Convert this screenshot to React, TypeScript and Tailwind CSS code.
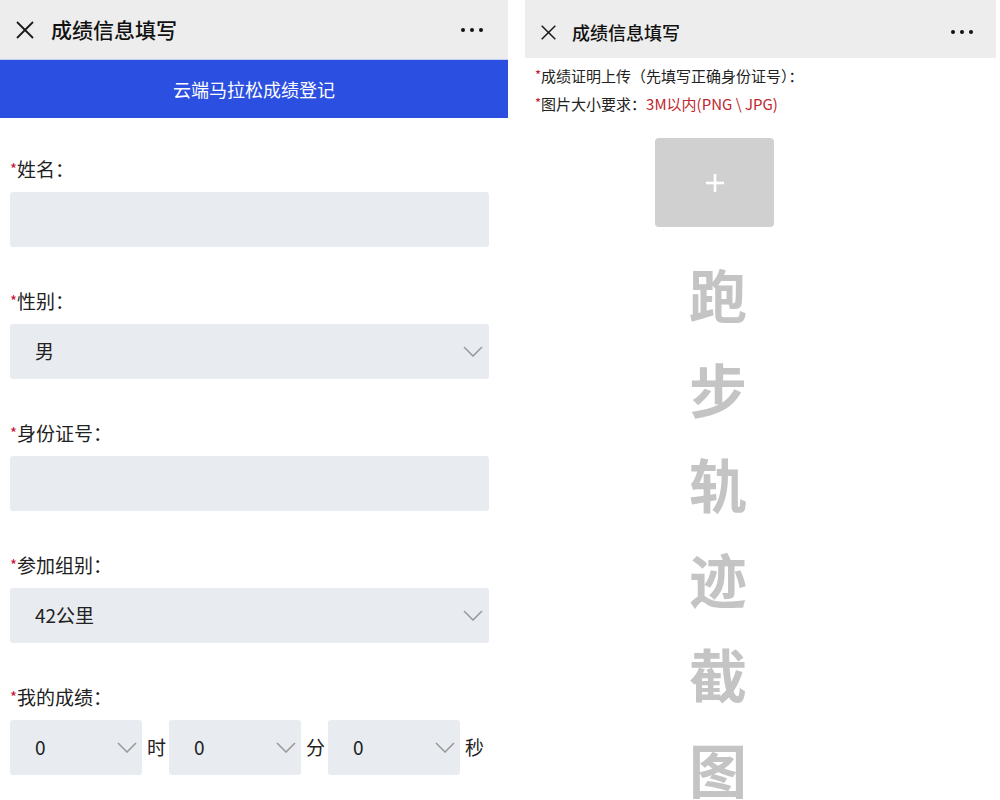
const font = { fontFamily: '"Noto Sans CJK SC", "Noto Sans", sans-serif' };

const CloseIcon = ({ size }: { size: number }) => (
  <svg width={size} height={size} viewBox="0 0 20 20" fill="none" stroke="#1a1a1a" strokeWidth="1.8">
    <line x1="2" y1="2" x2="18" y2="18" />
    <line x1="18" y1="2" x2="2" y2="18" />
  </svg>
);

const Dots = () => (
  <div className="flex gap-[5px]">
    <span className="w-[4px] h-[4px] rounded-full bg-[#111]" />
    <span className="w-[4px] h-[4px] rounded-full bg-[#111]" />
    <span className="w-[4px] h-[4px] rounded-full bg-[#111]" />
  </div>
);

const Chevron = () => (
  <svg width="20" height="11" viewBox="0 0 20 11" fill="none" stroke="#9b9b9b" strokeWidth="1.6">
    <polyline points="1,1 10,10 19,1" />
  </svg>
);

const Star = ({ size }: { size: string }) => (
  <span className={`${size} text-[#c8102e] relative top-[-2px]`}>*</span>
);

const Label = ({ text }: { text: string }) => (
  <div className="h-[26px] leading-[26px] text-[19px] text-[#222]">
    <Star size="text-[15px]" />
    {text}
  </div>
);

const Field = ({ label, value, select }: { label: string; value?: string; select?: boolean }) => (
  <div>
    <Label text={label} />
    <div className="mt-[10px] h-[55px] rounded-[3px] bg-[#e8ebef] flex items-center justify-between pl-[25px] pr-[6px] text-[19px] text-[#222]">
      <span>{value}</span>
      {select && <Chevron />}
    </div>
  </div>
);

const TimeSelect = () => (
  <div className="w-[132px] h-[55px] rounded-[3px] bg-[#e8ebef] flex items-center justify-between pl-[25px] pr-[5px] text-[19px] text-[#222]">
    <span>0</span>
    <Chevron />
  </div>
);

export default function App() {
  return (
    <div className="w-[1000px] h-[800px] overflow-hidden bg-white flex" style={font}>
      {/* left phone */}
      <div className="w-[508px] shrink-0">
        <div className="h-[59px] bg-[#ededed] flex items-center justify-between pl-[15px] pr-[25px]">
          <div className="flex items-center gap-[16px]">
            <CloseIcon size={20} />
            <span className="text-[21px] font-medium text-[#111]">成绩信息填写</span>
          </div>
          <Dots />
        </div>
        <div className="h-[59px] bg-[#2b4fe1] border-t border-[#c3cef5] flex items-center justify-center text-white text-[18px]">
          云端马拉松成绩登记
        </div>
        <div className="pl-[10px] pr-[19px] pt-[38px] flex flex-col gap-[41px]">
          <Field label="姓名：" />
          <Field label="性别：" value="男" select />
          <Field label="身份证号：" />
          <Field label="参加组别：" value="42公里" select />
          <div>
            <Label text="我的成绩：" />
            <div className="mt-[10px] flex items-center text-[19px] text-[#222]">
              <TimeSelect />
              <span className="ml-[5px] mr-[3px]">时</span>
              <TimeSelect />
              <span className="ml-[5px] mr-[3px]">分</span>
              <TimeSelect />
              <span className="ml-[5px]">秒</span>
            </div>
          </div>
        </div>
      </div>

      <div className="w-[17px] shrink-0" />

      {/* right phone */}
      <div className="w-[471px] shrink-0">
        <div className="h-[58px] bg-[#ededed] flex items-center justify-between pl-[15px] pr-[23px] pt-[6px]">
          <div className="flex items-center gap-[15px]">
            <CloseIcon size={17} />
            <span className="text-[18px] font-medium text-[#111]">成绩信息填写</span>
          </div>
          <Dots />
        </div>
        <div className="pl-[10px] pt-[4px] text-[15px] leading-[27px] text-[#222]">
          <div>
            <Star size="text-[13px]" />
            成绩证明上传（先填写正确身份证号）：
          </div>
          <div>
            <Star size="text-[13px]" />
            图片大小要求：<span className="text-[#c0272d]">3M以内(PNG \ JPG)</span>
          </div>
        </div>
        <div className="ml-[130px] mt-[20px] w-[119px] h-[89px] rounded-[4px] bg-[#d0d0d0] flex items-center justify-center">
          <svg width="18" height="18" viewBox="0 0 18 18" stroke="#ffffff" strokeWidth="2.6">
            <line x1="9" y1="0" x2="9" y2="18" />
            <line x1="0" y1="9" x2="18" y2="9" />
          </svg>
        </div>
        <div className="ml-[163px] mt-[19px] w-[60px] flex flex-col items-center text-[58px] leading-[95px] font-bold text-[#c4c4c4]">
          <span>跑</span>
          <span>步</span>
          <span>轨</span>
          <span>迹</span>
          <span>截</span>
          <span>图</span>
        </div>
      </div>
    </div>
  );
}
